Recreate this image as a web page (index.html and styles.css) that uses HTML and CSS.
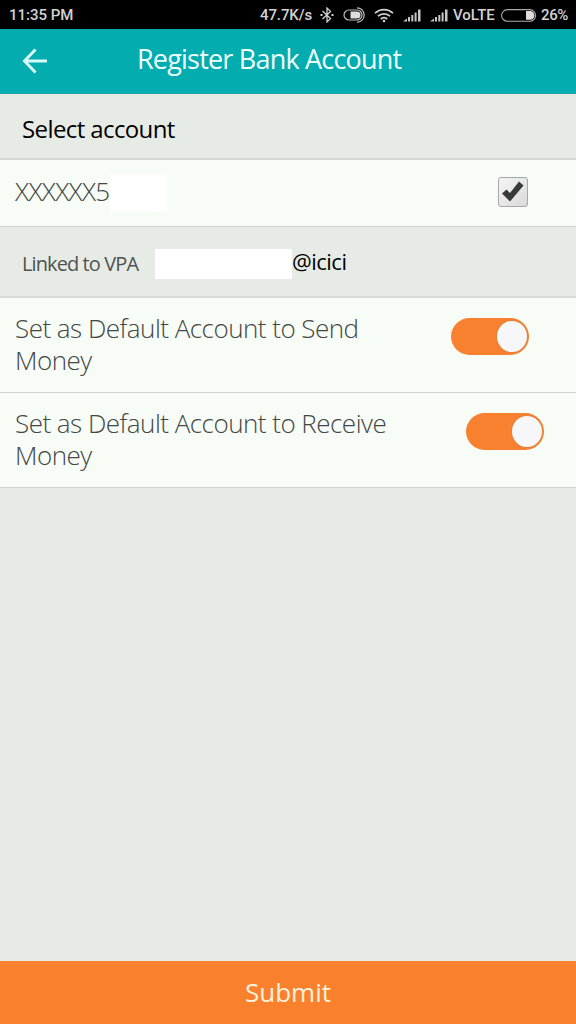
FILE: index.html
```html
<!DOCTYPE html>
<html lang="en">
<head>
<meta charset="utf-8">
<title>Register Bank Account</title>
<link rel="stylesheet" href="styles.css">
</head>
<body>
<div class="screen">
  <div class="status">
    <span class="clock">11:35 PM</span>
    <span class="speed">47.7K/s</span>
    <svg class="bluetooth" width="14" height="16" viewBox="0 0 14 16" fill="none" stroke="#d2d2d2" stroke-width="1.3"><path d="M2.5 4l8 7.6L7 15V1l3.500 3.400L2.500 12"/><path d="M.5 8h2M11.500 8h2" stroke-width="1.800"/></svg>
    <svg class="saver" width="23" height="16" viewBox="0 0 23 16" fill="none" stroke="#bcbcbc" stroke-width="1.200"><path d="M14 3H6a5 5 0 0 0 0 10h8"/><path d="M14 .8a7.200 7.200 0 0 1 0 14.400"/><path d="M7.500 4.500H14a3.500 3.500 0 0 1 0 7H7.500z" fill="#dedede" stroke="none"/><path d="M14 3a5 5 0 0 1 0 10"/></svg>
    <svg class="wifi" width="20" height="15" viewBox="0 0 20 15" fill="none" stroke="#d2d2d2" stroke-width="1.800"><path d="M1 5.200a13 13 0 0 1 18 0M4 8.200a8.700 8.700 0 0 1 12 0M6.800 11a4.600 4.600 0 0 1 6.400 0"/><circle cx="10" cy="13" r="1.300" fill="#d2d2d2" stroke="none"/></svg>
    <svg class="signal" width="18" height="13" viewBox="0 0 18 13" fill="#c6c6c6"><path d="M0 12.500l4-3v3zM5 8h2v4.500H5zM8.300 6h2v6.500h-2zM11.600 3.500h2v9h-2zM15 .5h2.500v12H15z"/></svg>
    <svg class="signal second" width="18" height="13" viewBox="0 0 18 13" fill="#c6c6c6"><path d="M0 12.500l4-3v3zM5 8h2v4.500H5zM8.300 6h2v6.500h-2zM11.600 3.500h2v9h-2zM15 .5h2.500v12H15z"/></svg>
    <span class="volte">VoLTE</span>
    <svg class="battery" width="36" height="13" viewBox="0 0 36 13"><rect x=".6" y=".6" width="34" height="11.600" rx="5.800" fill="none" stroke="#aaa" stroke-width="1.100"/><path d="M25 2h4a4.400 4.400 0 0 1 0 8.800h-4z" fill="#ddd"/></svg>
    <span class="percent">26%</span>
  </div>
  <header class="header">
    <svg class="back" width="26" height="28" viewBox="0 0 26 28" fill="none" stroke="#d9fbf7" stroke-width="3"><path d="M13.500 2.500L2.500 14l11 11.500M3 14h22"/></svg>
    <h1 class="title">Register Bank Account</h1>
  </header>
  <div class="section"><span class="section-title">Select account</span></div>
  <div class="account">
    <span class="number">XXXXXX5</span>
    <span class="mask number-mask"></span>
    <span class="checkbox"><svg width="22" height="22" viewBox="0 0 22 22"><path d="M0 12.500L4.500 8.500l3.500 3.500L17 .5l4.500 4L8 20.500z" fill="#383a39"/></svg></span>
  </div>
  <div class="vpa">
    <span class="vpa-label">Linked to VPA</span>
    <span class="mask vpa-mask"></span>
    <span class="vpa-handle">@icici</span>
  </div>
  <div class="option">
    <span class="label">Set as Default Account to Send<br>Money</span>
    <span class="toggle send"><span class="knob"></span></span>
  </div>
  <div class="option">
    <span class="label">Set as Default Account to Receive<br>Money</span>
    <span class="toggle receive"><span class="knob"></span></span>
  </div>
  <main class="empty"></main>
  <div class="submit"><span class="submit-text">Submit</span></div>
</div>
</body>
</html>
```
FILE: styles.css
```css
* { box-sizing: border-box; }
body { margin: 0; font-family: "Open Sans", sans-serif; }
.screen { width: 576px; height: 1024px; display: flex; flex-direction: column; background: #e7ebe6; white-space: nowrap; overflow: hidden; }
.screen svg, .screen span { flex: none; }
.status { height: 29px; flex: none; background: #000; color: #d2d2d2; display: flex; align-items: center; padding: 1px 0 0 9px; font: 500 15px/28px Roboto, sans-serif; }
.clock { width: 251px; }
.speed { width: 60px; letter-spacing: -.1px; }
.saver { margin-left: 9px; }
.wifi { margin-left: 8px; }
.signal { margin-left: 9px; }
.second { margin-left: 9px; }
.volte { margin-left: 5px; width: 42px; }
.battery { margin-left: 6px; margin-top: 1px; }
.percent { margin-left: 4px; letter-spacing: -.4px; }
.header { height: 65px; flex: none; background: #03acae; border-bottom: 1px solid #1aa5a5; display: flex; align-items: flex-start; padding-left: 22px; }
.back { margin-top: 18px; }
.title { margin: 11px 0 0 89px; color: #effffd; font-size: 27px; line-height: 37px; font-weight: 400; letter-spacing: -.8px; }
.section { height: 66px; flex: none; border-bottom: 2px solid #d3d8d3; padding: 18px 0 0 22px; }
.section-title { font-size: 24px; line-height: 34px; color: #000; letter-spacing: -.6px; display: block; }
.account { height: 67px; flex: none; background: #f7fcf6; border-bottom: 1px solid #cfd4cf; display: flex; align-items: flex-start; padding-left: 15px; }
.number { width: 95px; margin-top: 13px; font-size: 26px; line-height: 36px; font-weight: 300; color: #444745; letter-spacing: -.6px; }
.mask { background: #fff; }
.number-mask { width: 57px; height: 37px; margin-top: 15px; }
.checkbox { width: 30px; height: 30px; margin: 17px 0 0 331px; border: 1.500px solid #a5a7a5; border-radius: 3px; background: linear-gradient(135deg, #f4f5f4, #d8dad8); display: flex; align-items: center; justify-content: center; }
.vpa { height: 71px; flex: none; border-bottom: 2px solid #d7dbd7; display: flex; align-items: flex-start; padding-left: 22px; }
.vpa-label { width: 133px; margin-top: 22px; font-size: 20px; line-height: 30px; color: #505351; letter-spacing: -.9px; }
.vpa-mask { width: 137px; height: 30px; margin-top: 22px; }
.vpa-handle { margin-top: 19px; font-size: 22px; line-height: 30px; color: #000; letter-spacing: -.5px; }
.option { height: 95px; flex: none; background: #f7fcf6; border-bottom: 1px solid #cfd4cf; display: flex; align-items: flex-start; padding-left: 15px; }
.label { width: 436px; padding-top: 14px; font-size: 26px; line-height: 32px; font-weight: 300; color: #444745; letter-spacing: -.52px; }
.toggle { width: 78px; height: 37px; margin-top: 20px; border-radius: 19px; background: #f8812f; padding: 3px 3px 3px 46px; }
.receive { margin-left: 15px; }
.knob { display: block; width: 30px; height: 31px; border-radius: 50%; background: #f7f6f8; box-shadow: 0 0 1px 1px #df833f; }
.empty { flex: 1; }
.submit { height: 63px; flex: none; background: #f9812e; display: flex; justify-content: center; padding-top: 13px; }
.submit-text { font-size: 26px; line-height: 36px; color: #fff2dc; }
```
